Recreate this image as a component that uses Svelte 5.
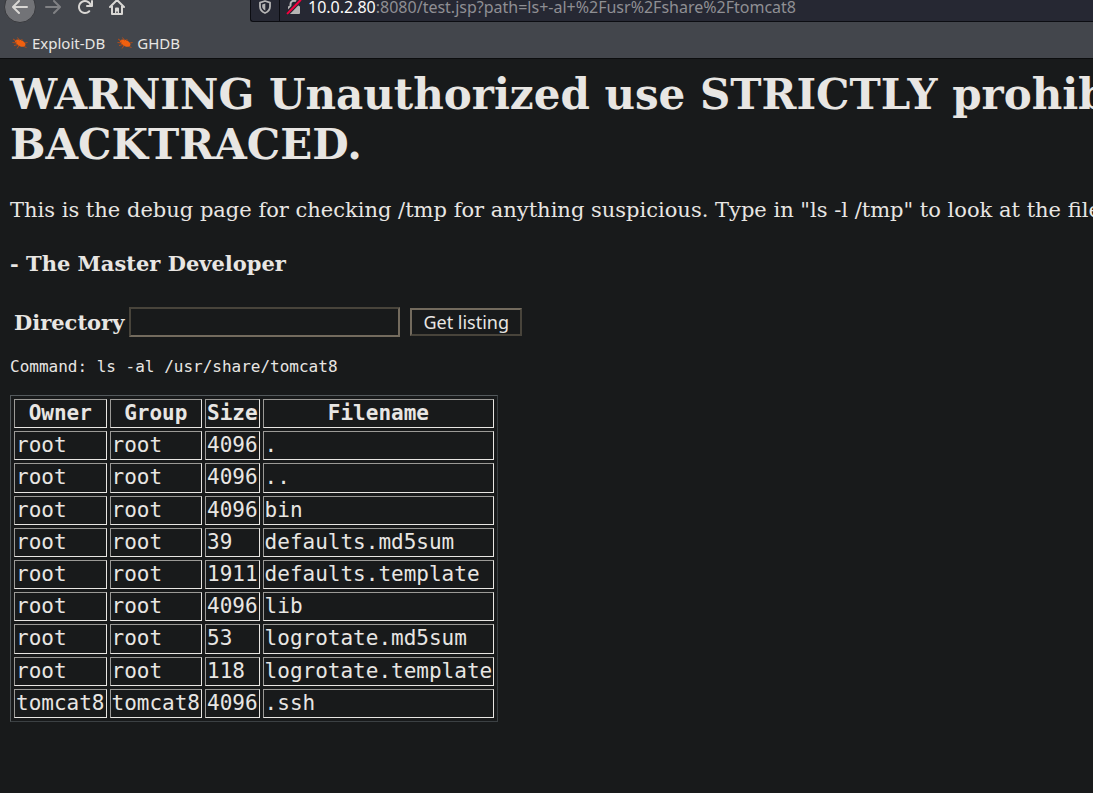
<script>
  const address = { host: '10.0.2.80', rest: ':8080/test.jsp?path=ls+-al+%2Fusr%2Fshare%2Ftomcat8' };
  const bookmarks = ['Exploit-DB', 'GHDB'];
  const columns = ['Owner', 'Group', 'Size', 'Filename'];
  const files = [
    ['root', 'root', '4096', '.'],
    ['root', 'root', '4096', '..'],
    ['root', 'root', '4096', 'bin'],
    ['root', 'root', '39', 'defaults.md5sum'],
    ['root', 'root', '1911', 'defaults.template'],
    ['root', 'root', '4096', 'lib'],
    ['root', 'root', '53', 'logrotate.md5sum'],
    ['root', 'root', '118', 'logrotate.template'],
    ['tomcat8', 'tomcat8', '4096', '.ssh']
  ];
  let directory = $state('');
</script>

<header>
  <nav class="toolbar">
    <button class="tool back" aria-label="Back">
      <svg viewBox="0 0 16 16" width="16" height="16"><path d="M15 7H3.414l4.293-4.293a1 1 0 0 0-1.414-1.414l-6 6a1 1 0 0 0 0 1.414l6 6a1 1 0 0 0 1.414-1.414L3.414 9H15a1 1 0 0 0 0-2z" /></svg>
    </button>
    <button class="tool forward" aria-label="Forward">
      <svg viewBox="0 0 16 16" width="16" height="16"><path d="M1 7h11.586L8.293 2.707a1 1 0 0 1 1.414-1.414l6 6a1 1 0 0 1 0 1.414l-6 6a1 1 0 0 1-1.414-1.414L12.586 9H1a1 1 0 0 1 0-2z" /></svg>
    </button>
    <button class="tool" aria-label="Reload">
      <svg viewBox="0 0 16 16" width="16" height="16"><path d="M15 1a1 1 0 0 0-1 1v2.418A6.995 6.995 0 1 0 8 15a6.954 6.954 0 0 0 4.95-2.05 1 1 0 0 0-1.414-1.414A5.019 5.019 0 1 1 12.549 6H10a1 1 0 0 0 0 2h5a1 1 0 0 0 1-1V2a1 1 0 0 0-1-1z" /></svg>
    </button>
    <button class="tool" aria-label="Home">
      <svg viewBox="0 0 16 16" width="16" height="16">
        <path d="M1 8 8 1l7 7M3 7v8h10V7" fill="none" stroke="currentColor" stroke-width="2" stroke-linecap="round" stroke-linejoin="round" />
        <path d="M6 15V9.500a1 1 0 0 1 1-1h2a1 1 0 0 1 1 1V15H8.700v-2.500H7.300V15z" />
      </svg>
    </button>
    <div class="address">
      <span class="shield">
        <svg viewBox="0 0 16 16" width="16" height="16">
          <path d="M8 2 13 3.600V7.500c0 3.200-2 5.300-5 6.500-3-1.200-5-3.300-5-6.500V3.600z" fill="none" stroke="currentColor" stroke-width="1.800" stroke-linejoin="round" />
          <path d="M8.300 4.600v7C6.300 10.600 5.200 9.200 5.200 7.500V5.500z" />
        </svg>
      </span>
      <span class="lock">
        <svg viewBox="0 0 16 16" width="16" height="16">
          <path d="M4.500 8V5.200a3.500 3.500 0 0 1 7 0V8" fill="none" stroke="currentColor" stroke-width="2" />
          <rect x="2" y="7" width="12" height="8" rx="1" />
          <path d="M1.200 14.600 14.400 1" stroke="#262833" stroke-width="4.500" />
          <path d="M1.600 14.400 14.400 1.200" stroke="#f5003d" stroke-width="2" stroke-linecap="round" />
        </svg>
      </span>
      <span class="url"><b>{address.host}</b>{address.rest}</span>
    </div>
  </nav>
  <nav class="bookmarks">
    {#each bookmarks as name}
      <a href="#{name}">
        <svg viewBox="0 0 16 16" width="16" height="16">
          <path d="M2.500 5.500C5 4 8 4.300 10.200 5.600c2 1.100 3.300 2.700 3.300 4.200-.2 1.600-2 2.300-4.200 1.900-3-.6-5.200-2.600-6-4.800z" fill="#f0600f" />
          <path d="M0.500 7.500 5 8M2 10.500l4-1M5 13.500l2-3M5.500 2.500l2 3M10 4l-.5 2M12 11.500l2.500 1M13 8l2.500-.500M1 4l3.500 2" fill="none" stroke="#b24c18" stroke-width="1" />
        </svg>{name}
      </a>
    {/each}
  </nav>
</header>

<main>
  <h1>WARNING Unauthorized use STRICTLY prohibited<br />BACKTRACED.</h1>
  <p>This is the debug page for checking /tmp for anything suspicious. Type in "ls -l /tmp" to look at the files</p>
  <h4>- The Master Developer</h4>
  <form onsubmit={(event) => event.preventDefault()}>
    <label for="directory">Directory</label>
    <input id="directory" type="text" bind:value={directory} />
    <button type="submit">Get listing</button>
  </form>
  <pre>Command: ls -al /usr/share/tomcat8</pre>
  <table>
    <thead>
      <tr>
        {#each columns as column}<th scope="col">{column}</th>{/each}
      </tr>
    </thead>
    <tbody>
      {#each files as row}
        <tr>
          {#each row as cell}<td>{cell}</td>{/each}
        </tr>
      {/each}
    </tbody>
  </table>
</main>

<style>
  :global(body) {
    margin: 0;
    background: #181a1b;
  }

  header {
    overflow: hidden;
    padding-bottom: 4px;
    background: #43464c;
    border-bottom: 1px solid #0c0d0e;
    font-family: "Noto Sans", sans-serif;
    font-size: 15px;
    color: #e8e6e3;
  }

  .toolbar {
    display: flex;
    align-items: center;
    height: 48px;
    margin-top: -17px;
    padding-left: 4px;
  }

  .tool {
    display: grid;
    place-items: center;
    box-sizing: border-box;
    flex: none;
    width: 32px;
    height: 32px;
    padding: 0;
    border: 0;
    background: none;
    color: #d9d7d4;
  }

  svg {
    display: block;
    fill: currentColor;
  }

  .back {
    margin-right: 1px;
    border: 1px solid #38393d;
    border-radius: 50%;
    background: #727377;
  }

  .forward {
    color: #808184;
  }

  .address {
    display: flex;
    align-items: center;
    flex: 1;
    min-width: 0;
    box-sizing: border-box;
    height: 30px;
    margin-left: 117px;
    border: 1px solid #0c0d12;
    border-right: 0;
    border-radius: 3px 0 0 3px;
    background: #262833;
  }

  .shield,
  .lock {
    flex: none;
    padding: 6px;
    color: #b6b5b5;
  }

  .shield {
    border-right: 1px solid #0c0d12;
  }

  .url {
    overflow: hidden;
    font-size: 16px;
    white-space: nowrap;
    color: #8f8f93;
  }

  .url b {
    font-weight: 400;
    color: #fbfaf9;
  }

  .bookmarks {
    display: flex;
    align-items: center;
    gap: 12px;
    height: 23px;
    padding-left: 12px;
  }

  .bookmarks a {
    display: flex;
    align-items: center;
    gap: 4px;
    color: inherit;
    line-height: 20px;
    text-decoration: none;
  }

  main {
    overflow: hidden;
    padding: 11px 0 16px 10px;
    font-family: "DejaVu Serif", serif;
    font-size: 21px;
    line-height: 25px;
    color: #e8e6e3;
  }

  h1,
  p,
  h4 {
    margin: 0 0 28px;
    white-space: nowrap;
  }

  h1 {
    font-size: 42px;
    line-height: 50px;
  }

  h4 {
    margin-bottom: 31px;
    font-size: 21px;
  }

  form {
    display: flex;
    align-items: center;
    padding-left: 4px;
  }

  label {
    font-weight: 700;
  }

  input,
  form button {
    box-sizing: border-box;
    background: #181a1b;
    color: #e8e6e3;
    font-family: "Noto Sans", sans-serif;
    font-size: 18px;
    line-height: 24px;
    border: 2px solid;
    border-radius: 0;
  }

  input {
    width: 271px;
    height: 30px;
    margin: 0 10px 0 5px;
    border-color: #48443b #736b5e #736b5e #48443b;
  }

  form button {
    padding: 0 11px;
    border-color: #736b5e #48443b #48443b #736b5e;
  }

  pre {
    margin: 20px 0 19px;
    font-family: "DejaVu Sans Mono", monospace;
    font-size: 16px;
    line-height: 19px;
  }

  table {
    border: 1px solid;
    border-color: #545a5d #3b4043 #3b4043 #545a5d;
    border-spacing: 3px;
    font-family: "DejaVu Sans Mono", monospace;
    font-size: 21px;
    line-height: 1.2;
  }

  th,
  td {
    padding: 1px;
    border: 1px solid;
    border-color: #9b9a97 #e8e6e3 #e8e6e3 #9b9a97;
    text-align: left;
  }

  th {
    text-align: center;
  }
</style>
